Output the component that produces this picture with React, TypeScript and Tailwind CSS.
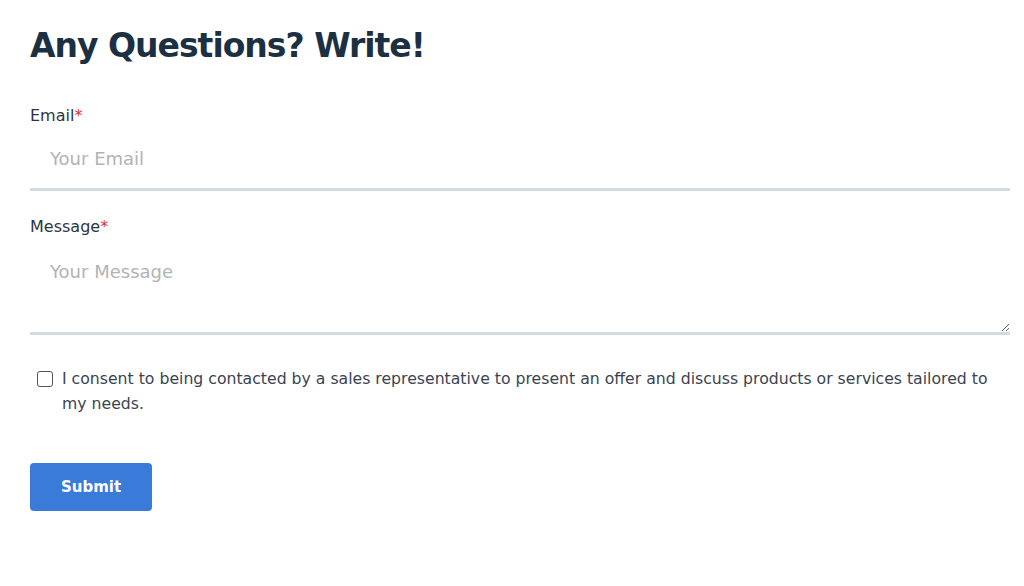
import { useState } from "react";

export default function App() {
  const [email, setEmail] = useState("");
  const [message, setMessage] = useState("");
  const [consent, setConsent] = useState(false);

  return (
    <div className="min-h-[586px] bg-white px-[30px] pt-[22px] font-['DejaVu_Sans',sans-serif] text-[#2c3641]">
      <h1 className="text-[33px] font-bold leading-[48px] tracking-[-1px] text-[#1b3042]">Any Questions? Write!</h1>

      <form className="mt-[35px] flex w-[980px] flex-col" onSubmit={(e) => e.preventDefault()}>
        <label htmlFor="email" className="text-[16px] leading-[22px]">
          Email<span className="text-[#e03131]">*</span>
        </label>
        <input
          type="email"
          id="email"
          placeholder="Your Email"
          value={email}
          onChange={(e) => setEmail(e.target.value)}
          className="mt-[8px] h-[56px] w-full border-b-[3px] border-[#d3dbe0] px-[20px] pb-[6px] text-[18px] outline-none placeholder:text-[#b3b3b3]"
        />

        <label htmlFor="message" className="mt-[25px] text-[16px] leading-[22px]">
          Message<span className="text-[#e03131]">*</span>
        </label>
        <textarea
          id="message"
          placeholder="Your Message"
          value={message}
          onChange={(e) => setMessage(e.target.value)}
          className="mt-[8px] h-[89px] w-full border-b-[3px] border-[#d3dbe0] px-[20px] pt-[13px] text-[18px] leading-[26px] outline-none placeholder:text-[#b3b3b3]"
        />

        <div className="mt-[31px] flex items-start gap-[9px] pl-[7px] pr-[20px]">
          <input
            type="checkbox"
            id="consent"
            checked={consent}
            onChange={(e) => setConsent(e.target.checked)}
            className="mt-[5px] h-[16px] w-[16px] shrink-0 appearance-none rounded-[3px] border-[1.5px] border-[#555] bg-white checked:bg-[#3a7bd5]"
          />
          <label htmlFor="consent" className="text-[15.7px] leading-[25px] text-[#3a4450]">
            I consent to being contacted by a sales representative to present an offer and discuss products or services tailored to my needs.
          </label>
        </div>

        <button
          type="submit"
          className="mt-[47px] h-[48px] w-[122px] rounded-[4px] bg-[#3a7bd9] text-[15px] font-bold text-white"
        >
          Submit
        </button>
      </form>
    </div>
  );
}
